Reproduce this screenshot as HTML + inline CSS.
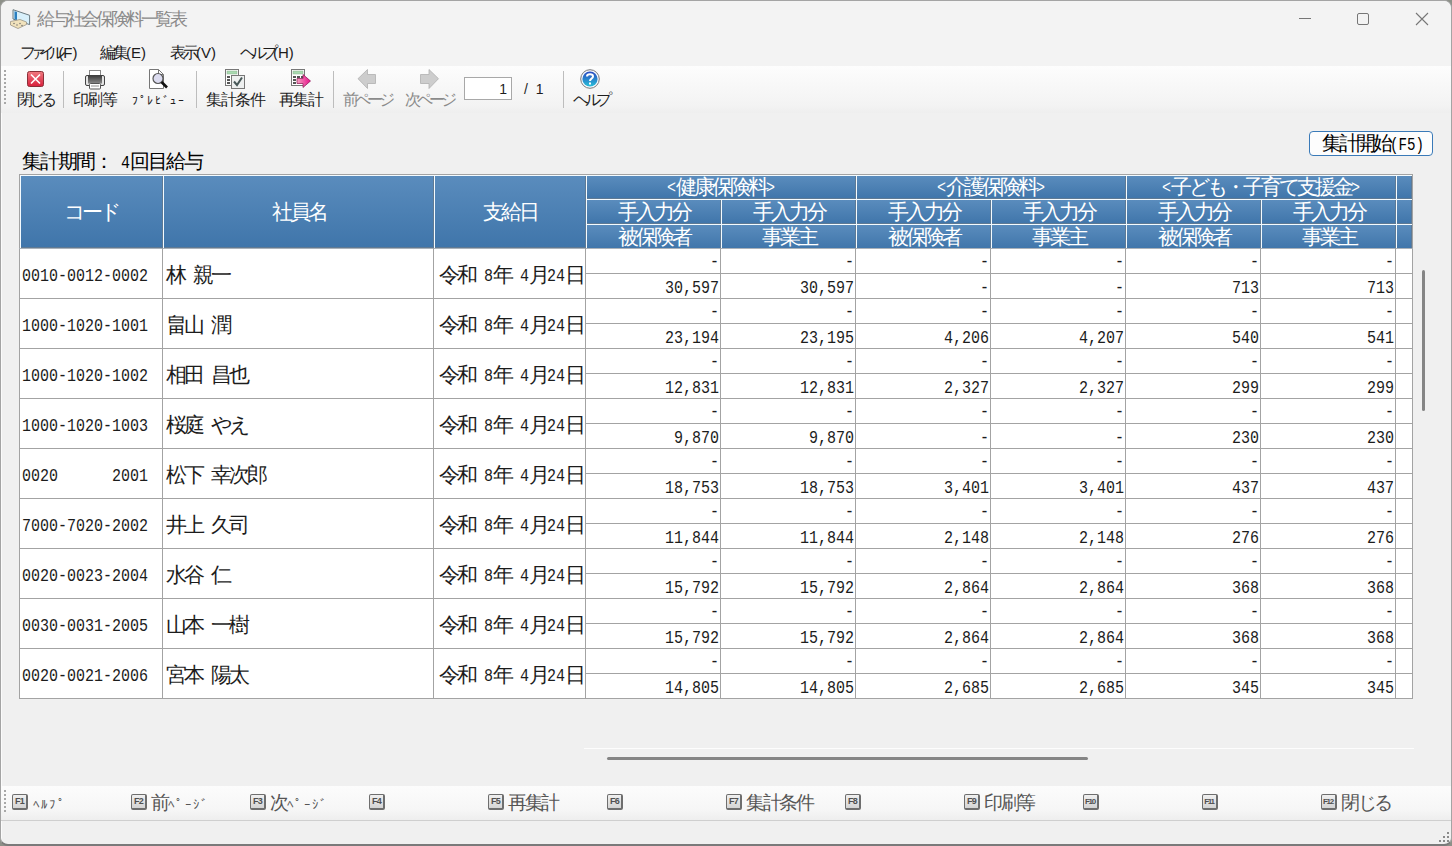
<!DOCTYPE html>
<html><head><meta charset="utf-8"><title>給与社会保険料一覧表</title>
<style>
html,body{margin:0;padding:0;width:1452px;height:846px;overflow:hidden;background:#8d9088;font-family:"Liberation Sans",sans-serif;}
.a{position:absolute;box-sizing:border-box;}
.t{position:absolute;white-space:pre;line-height:20px;height:20px;}
.t i{font-style:normal;display:inline-block;text-align:center;font-family:"Liberation Sans",sans-serif;font-size:var(--fs);}
.mk{display:inline-block;width:0;height:0}
.t b{font-weight:normal;display:inline-block}
.tb i{position:relative;top:1px}
.t u{text-decoration:none;display:inline-block;transform-origin:0 0}
#win{position:absolute;left:0;top:0;width:1452px;height:846px;background:#f0f0f0;border-radius:8px;border:1px solid #a4a4a4;border-bottom:2px solid #7a7a7a;box-sizing:border-box;overflow:hidden;box-shadow:inset 1px 1px 0 #fbfbfb}
.hc{position:absolute;box-sizing:border-box;background:linear-gradient(#5a8cbd,#3f75aa);border-left:1px solid #f4fbff;border-top:1px solid #f4fbff;box-shadow:inset -1px -1px 0 #5f7a94}
.vl{position:absolute;width:1px;background:#a3a3a3}
.hl{position:absolute;height:1px;background:#a3a3a3}
.sep{position:absolute;width:1px;top:71px;height:37px;background:#bdbdbd}
.fk{position:absolute;top:794px;width:16px;height:16px;box-sizing:border-box;border:1px solid #6e6e6e;border-radius:2px;background:linear-gradient(#f0f0f0,#d4d4d4);border-bottom-width:2px;border-right-width:2px;font:bold 9px "Liberation Sans",sans-serif;color:#505050;text-align:center;line-height:13px;letter-spacing:-0.8px}
</style></head><body>
<div id="win">
  <div class="a" style="left:0;top:0;width:1452px;height:65px;background:#f3f3f3"></div>
  <div class="a" style="left:0;top:65px;width:1452px;height:47px;background:linear-gradient(#fdfdfd 0%,#f8f8f8 40%,#f3f3f3 85%,#eeeeee 100%)"></div>
  <div class="a" style="left:0;top:785px;width:1452px;height:35px;background:linear-gradient(#fcfcfc,#f6f6f6 70%,#eeeeee);border-bottom:1px solid #cfcfcf"></div>
</div>

<!-- title icon -->
<svg class="a" style="left:9px;top:8px" width="22" height="22" viewBox="0 0 22 22">
  <path d="M4 1.7 L4 11 L20.6 16.6 L20.6 7.3 Z" fill="#d8f0fb" stroke="#6b7a80" stroke-width="1"/>
  <path d="M5.5 3.2 L8 4 L8 12 L5.5 11.2 Z" fill="#2a7fc0"/>
  <path d="M1.5 13.5 L11 11.5 L17.5 14 L17.5 16.5 L9 20.5 L1.5 17 Z" fill="#f1e2bc" stroke="#9a9384" stroke-width="0.8"/>
  <circle cx="5" cy="15.5" r="0.7" fill="#666"/><circle cx="8" cy="17" r="0.7" fill="#666"/><circle cx="11" cy="15.5" r="0.7" fill="#666"/><circle cx="13" cy="17.5" r="0.7" fill="#666"/>
</svg>
<!-- window controls -->
<div class="a" style="left:1299px;top:18px;width:12px;height:1px;background:#767676"></div>
<div class="a" style="left:1357px;top:13px;width:12px;height:12px;border:1px solid #767676;border-radius:2px"></div>
<svg class="a" style="left:1415px;top:12px" width="14" height="14" viewBox="0 0 14 14"><path d="M1 1L13 13M13 1L1 13" stroke="#767676" stroke-width="1.1"/></svg>

<!-- toolbar grip -->
<svg class="a" style="left:4px;top:70px" width="3" height="36"><g fill="#a8a8a8"><rect x="0" y="0" width="2" height="2"/><rect x="0" y="4" width="2" height="2"/><rect x="0" y="8" width="2" height="2"/><rect x="0" y="12" width="2" height="2"/><rect x="0" y="16" width="2" height="2"/><rect x="0" y="20" width="2" height="2"/><rect x="0" y="24" width="2" height="2"/><rect x="0" y="28" width="2" height="2"/><rect x="0" y="32" width="2" height="2"/></g></svg>
<div class="sep" style="left:63px"></div>
<div class="sep" style="left:196px"></div>
<div class="sep" style="left:333px"></div>
<div class="sep" style="left:563px"></div>

<!-- close icon -->
<svg class="a" style="left:27px;top:71px" width="17" height="16" viewBox="0 0 17 16">
  <defs><linearGradient id="rg" x1="0" y1="0" x2="0" y2="1"><stop offset="0" stop-color="#f07a80"/><stop offset="1" stop-color="#d8203c"/></linearGradient></defs>
  <rect x="0.5" y="0.5" width="16" height="15" rx="2" fill="url(#rg)" stroke="#8a3038" stroke-width="1"/>
  <path d="M4 3.5L13 12.5M13 3.5L4 12.5" stroke="#fff" stroke-width="1.6"/>
</svg>
<!-- printer -->
<svg class="a" style="left:84px;top:69px" width="22" height="21" viewBox="0 0 22 21">
  <defs><linearGradient id="pg" x1="0" y1="0" x2="0" y2="1"><stop offset="0" stop-color="#3a3a3a"/><stop offset="1" stop-color="#8a8a8a"/></linearGradient></defs>
  <rect x="5.5" y="1.5" width="11" height="5" fill="#fff" stroke="#888"/>
  <rect x="1.5" y="6.5" width="19" height="10" rx="1.5" fill="#e4e4e4" stroke="#444"/>
  <rect x="4" y="6.5" width="14" height="8" fill="url(#pg)"/>
  <rect x="5.5" y="14.5" width="11" height="5.5" rx="1" fill="#fff" stroke="#555"/>
  <rect x="7" y="16" width="8" height="2" fill="#c8c8c8"/>
</svg>
<!-- preview -->
<svg class="a" style="left:148px;top:68px" width="22" height="22" viewBox="0 0 22 22">
  <path d="M1.5 1.5 L10.5 1.5 L15.5 6.5 L15.5 20.5 L1.5 20.5 Z" fill="#fff" stroke="#777"/>
  <path d="M10.5 1.5 L10.5 6.5 L15.5 6.5" fill="none" stroke="#777"/>
  <circle cx="10" cy="10.5" r="5" fill="#dcdcf0" stroke="#555" stroke-width="1.2"/>
  <path d="M13.5 14 L19 19.5" stroke="#111" stroke-width="2.6"/>
</svg>
<!-- 集計条件 icon -->
<svg class="a" style="left:224px;top:68px" width="22" height="22" viewBox="0 0 22 22">
  <rect x="1.5" y="1.5" width="13" height="16" fill="#fff" stroke="#777"/>
  <rect x="3" y="3" width="10" height="3" fill="#a9dab0" stroke="#8ab090" stroke-width="0.5"/>
  <rect x="3" y="8" width="3" height="2" fill="#555"/><rect x="3" y="11" width="3" height="2" fill="#555"/><rect x="3" y="14" width="3" height="2" fill="#555"/>
  <rect x="7.5" y="7.5" width="13" height="13" fill="#eef0f0" stroke="#777"/>
  <path d="M10 13.5 L13 17 L18 9.5" fill="none" stroke="#4a5a5a" stroke-width="2"/>
</svg>
<!-- 再集計 icon -->
<svg class="a" style="left:290px;top:68px" width="22" height="22" viewBox="0 0 22 22">
  <defs><linearGradient id="kg" x1="0" y1="0" x2="1" y2="0"><stop offset="0" stop-color="#f5a0c0"/><stop offset="1" stop-color="#e8108a"/></linearGradient></defs>
  <rect x="1.5" y="1.5" width="13" height="16" fill="#fff" stroke="#777"/>
  <rect x="3" y="3" width="10" height="3" fill="#a9dab0" stroke="#8ab090" stroke-width="0.5"/>
  <rect x="3" y="8" width="3" height="2" fill="#555"/><rect x="7" y="8" width="3" height="2" fill="#555"/><rect x="11" y="8" width="2" height="2" fill="#555"/><rect x="3" y="11" width="3" height="2" fill="#555"/><rect x="3" y="14" width="3" height="2" fill="#555"/>
  <path d="M7 10.5 L13 10.5 L13 6.5 L20.5 13 L13 19.5 L13 15.5 L7 15.5 Z" fill="url(#kg)" stroke="#8a1050" stroke-width="0.7"/>
</svg>
<!-- arrows -->
<svg class="a" style="left:357px;top:69px" width="20" height="20" viewBox="0 0 20 20"><path d="M1 9.7 L10.5 0.5 L10.5 5.5 L18.5 5.5 L18.5 14.5 L10.5 14.5 L10.5 19.5 Z" fill="#cdcdcd" stroke="#b0b0b0" stroke-width="0.8"/></svg>
<svg class="a" style="left:419px;top:69px" width="21" height="20" viewBox="0 0 21 20"><path d="M19.5 9.7 L10 0.5 L10 5.5 L1.5 5.5 L1.5 14.5 L10 14.5 L10 19.5 Z" fill="#cdcdcd" stroke="#b0b0b0" stroke-width="0.8"/></svg>
<!-- page textbox -->
<div class="a" style="left:464px;top:77px;width:48px;height:23px;background:#fff;border:1px solid #a8a8a8"></div>
<!-- help icon -->
<svg class="a" style="left:580px;top:69px" width="20" height="20" viewBox="0 0 20 20">
  <defs><linearGradient id="hg" x1="0" y1="0" x2="0" y2="1"><stop offset="0" stop-color="#2a48c0"/><stop offset="1" stop-color="#28c0d8"/></linearGradient></defs>
  <circle cx="10" cy="10" r="9.3" fill="#f4f8ff" stroke="#7a7a7a" stroke-width="1"/>
  <circle cx="10" cy="10" r="7.6" fill="url(#hg)"/>
  <path d="M7 7.5 C7 4.5 13 4.5 13 7.5 C13 9.5 10 9.5 10 12" fill="none" stroke="#fff" stroke-width="2"/>
  <rect x="9" y="13.5" width="2" height="2" fill="#fff"/>
</svg>

<!-- button -->
<div class="a" style="left:1309px;top:131px;width:124px;height:25px;background:#fdfdfd;border:1px solid #3a7ab8;border-radius:4px"></div>

<!-- table body bg -->
<div class="a" style="left:19px;top:174px;width:1394px;height:525px;background:#fff;border:1px solid #a3a3a3"></div>
<!-- header cells -->
<div class="hc" style="left:20px;top:175px;width:143px;height:73px"></div>
<div class="hc" style="left:163px;top:175px;width:271px;height:73px"></div>
<div class="hc" style="left:434px;top:175px;width:152px;height:73px"></div>
<div class="hc" style="left:586px;top:175px;width:270px;height:24px"></div>
<div class="hc" style="left:856px;top:175px;width:270px;height:24px"></div>
<div class="hc" style="left:1126px;top:175px;width:270px;height:24px"></div>
<div class="hc" style="left:1396px;top:175px;width:16px;height:24px"></div>
<div class="hc" style="left:586px;top:199px;width:135px;height:25px"></div>
<div class="hc" style="left:586px;top:224px;width:135px;height:25px"></div>
<div class="hc" style="left:721px;top:199px;width:135px;height:25px"></div>
<div class="hc" style="left:721px;top:224px;width:135px;height:25px"></div>
<div class="hc" style="left:856px;top:199px;width:135px;height:25px"></div>
<div class="hc" style="left:856px;top:224px;width:135px;height:25px"></div>
<div class="hc" style="left:991px;top:199px;width:135px;height:25px"></div>
<div class="hc" style="left:991px;top:224px;width:135px;height:25px"></div>
<div class="hc" style="left:1126px;top:199px;width:135px;height:25px"></div>
<div class="hc" style="left:1126px;top:224px;width:135px;height:25px"></div>
<div class="hc" style="left:1261px;top:199px;width:135px;height:25px"></div>
<div class="hc" style="left:1261px;top:224px;width:135px;height:25px"></div>
<div class="hc" style="left:1396px;top:199px;width:16px;height:25px"></div>
<div class="hc" style="left:1396px;top:224px;width:16px;height:25px"></div>
<div class="hl" style="left:19px;top:248px;width:1394px;background:#a9b1b9"></div>
<div class="vl" style="left:162px;top:248px;height:450px"></div>
<div class="vl" style="left:433px;top:248px;height:450px"></div>
<div class="vl" style="left:585px;top:248px;height:450px"></div>
<div class="vl" style="left:720px;top:248px;height:450px"></div>
<div class="vl" style="left:855px;top:248px;height:450px"></div>
<div class="vl" style="left:990px;top:248px;height:450px"></div>
<div class="vl" style="left:1125px;top:248px;height:450px"></div>
<div class="vl" style="left:1260px;top:248px;height:450px"></div>
<div class="vl" style="left:1395px;top:248px;height:450px"></div>
<div class="hl" style="left:585px;top:273px;width:827px"></div>
<div class="hl" style="left:19px;top:298px;width:1393px"></div>
<div class="hl" style="left:585px;top:323px;width:827px"></div>
<div class="hl" style="left:19px;top:348px;width:1393px"></div>
<div class="hl" style="left:585px;top:373px;width:827px"></div>
<div class="hl" style="left:19px;top:398px;width:1393px"></div>
<div class="hl" style="left:585px;top:423px;width:827px"></div>
<div class="hl" style="left:19px;top:448px;width:1393px"></div>
<div class="hl" style="left:585px;top:473px;width:827px"></div>
<div class="hl" style="left:19px;top:498px;width:1393px"></div>
<div class="hl" style="left:585px;top:523px;width:827px"></div>
<div class="hl" style="left:19px;top:548px;width:1393px"></div>
<div class="hl" style="left:585px;top:573px;width:827px"></div>
<div class="hl" style="left:19px;top:598px;width:1393px"></div>
<div class="hl" style="left:585px;top:623px;width:827px"></div>
<div class="hl" style="left:19px;top:648px;width:1393px"></div>
<div class="hl" style="left:585px;top:673px;width:827px"></div>

<!-- scrollbars -->
<div class="a" style="left:1422px;top:270px;width:3px;height:141px;background:#858585;border-radius:2px"></div>
<div class="a" style="left:584px;top:748px;width:830px;height:1px;background:#fdfdfd"></div>
<div class="a" style="left:607px;top:757px;width:481px;height:3px;background:#858585;border-radius:2px"></div>

<!-- fkey grip -->
<svg class="a" style="left:4px;top:790px" width="3" height="24"><g fill="#a8a8a8"><rect x="0" y="0" width="2" height="2"/><rect x="0" y="4" width="2" height="2"/><rect x="0" y="8" width="2" height="2"/><rect x="0" y="12" width="2" height="2"/><rect x="0" y="16" width="2" height="2"/><rect x="0" y="20" width="2" height="2"/></g></svg>
<div class="fk" style="left:12px">F1</div>
<div class="fk" style="left:131px">F2</div>
<div class="fk" style="left:250px">F3</div>
<div class="fk" style="left:369px">F4</div>
<div class="fk" style="left:488px">F5</div>
<div class="fk" style="left:607px">F6</div>
<div class="fk" style="left:726px">F7</div>
<div class="fk" style="left:845px">F8</div>
<div class="fk" style="left:964px">F9</div>
<div class="fk" style="left:1083px;font-size:8px;letter-spacing:-1.2px;text-indent:-1px">F10</div>
<div class="fk" style="left:1202px;font-size:8px;letter-spacing:-1.2px;text-indent:-1px">F11</div>
<div class="fk" style="left:1321px;font-size:8px;letter-spacing:-1.2px;text-indent:-1px">F12</div>
<!-- resize grip -->
<svg class="a" style="left:1438px;top:832px" width="12" height="11"><g fill="#8a8a8a"><rect x="9" y="0" width="2" height="2"/><rect x="5" y="4" width="2" height="2"/><rect x="9" y="4" width="2" height="2"/><rect x="1" y="8" width="2" height="2"/><rect x="5" y="8" width="2" height="2"/><rect x="9" y="8" width="2" height="2"/></g></svg>

<div class="t " id="t0" style="top:9.00px;color:#8a8a8a;font-family:'Liberation Sans',sans-serif;font-size:13.320px;left:37px;--fs:18px;"><i style="width:14.8px">給</i><i style="width:14.8px">与</i><i style="width:14.8px">社</i><i style="width:14.8px">会</i><i style="width:14.8px">保</i><i style="width:14.8px">険</i><i style="width:14.8px">料</i><i style="width:14.8px">一</i><i style="width:14.8px">覧</i><i style="width:14.8px">表</i></div>
<div class="t " id="t1" style="top:43.00px;color:#1b1b1b;font-family:'Liberation Sans',sans-serif;font-size:15.000px;left:20px;--fs:16px;"><i style="width:9.6px">フ</i><i style="width:9.6px">ァ</i><i style="width:9.6px">イ</i><i style="width:9.6px">ル</i>(F)</div>
<div class="t " id="t2" style="top:43.00px;color:#1b1b1b;font-family:'Liberation Sans',sans-serif;font-size:15.000px;left:100px;--fs:16px;"><i style="width:13px">編</i><i style="width:13px">集</i>(E)</div>
<div class="t " id="t3" style="top:43.00px;color:#1b1b1b;font-family:'Liberation Sans',sans-serif;font-size:15.000px;left:170px;--fs:16px;"><i style="width:13px">表</i><i style="width:13px">示</i>(V)</div>
<div class="t " id="t4" style="top:43.00px;color:#1b1b1b;font-family:'Liberation Sans',sans-serif;font-size:15.000px;left:240px;--fs:16px;"><i style="width:11px">ヘ</i><i style="width:11px">ル</i><i style="width:11px">プ</i>(H)</div>
<div class="t " id="t5" style="top:90.00px;color:#1e1e1e;font-family:'Liberation Sans',sans-serif;font-size:15.000px;left:17px;--fs:16px;"><i style="width:12px">閉</i><i style="width:12px">じ</i><i style="width:12px">る</i></div>
<div class="t " id="t6" style="top:90.00px;color:#1e1e1e;font-family:'Liberation Sans',sans-serif;font-size:15.000px;left:73px;--fs:16px;"><i style="width:14.4px">印</i><i style="width:14.4px">刷</i><i style="width:14.4px">等</i></div>
<div class="t " id="t7" style="top:90.00px;color:#1e1e1e;font-family:'Liberation Sans',sans-serif;font-size:15.000px;left:131px;--fs:16px;"><i style="width:7.7px;font-size:12px">ﾌ</i><i style="width:7.7px;font-size:12px">ﾟ</i><i style="width:7.7px;font-size:12px">ﾚ</i><i style="width:7.7px;font-size:12px">ﾋ</i><i style="width:7.7px;font-size:12px">ﾞ</i><i style="width:7.7px;font-size:12px">ｭ</i><i style="width:7.7px;font-size:12px">ｰ</i></div>
<div class="t " id="t8" style="top:90.00px;color:#1e1e1e;font-family:'Liberation Sans',sans-serif;font-size:15.000px;left:206px;--fs:16px;"><i style="width:14.5px">集</i><i style="width:14.5px">計</i><i style="width:14.5px">条</i><i style="width:14.5px">件</i></div>
<div class="t " id="t9" style="top:90.00px;color:#1e1e1e;font-family:'Liberation Sans',sans-serif;font-size:15.000px;left:279px;--fs:16px;"><i style="width:14.4px">再</i><i style="width:14.4px">集</i><i style="width:14.4px">計</i></div>
<div class="t " id="t10" style="top:90.00px;color:#8a8a8a;font-family:'Liberation Sans',sans-serif;font-size:15.000px;left:343px;--fs:16px;"><i style="width:12px">前</i><i style="width:12px">ペ</i><i style="width:12px">ー</i><i style="width:12px">ジ</i></div>
<div class="t " id="t11" style="top:90.00px;color:#8a8a8a;font-family:'Liberation Sans',sans-serif;font-size:15.000px;left:405px;--fs:16px;"><i style="width:12px">次</i><i style="width:12px">ペ</i><i style="width:12px">ー</i><i style="width:12px">ジ</i></div>
<div class="t " id="t12" style="top:90.00px;color:#1e1e1e;font-family:'Liberation Sans',sans-serif;font-size:15.000px;left:573px;--fs:16px;"><i style="width:11.7px">ヘ</i><i style="width:11.7px">ル</i><i style="width:11.7px">プ</i></div>
<div class="t " id="t13" style="top:79.00px;color:#1e1e1e;font-family:'Liberation Sans',sans-serif;font-size:14.000px;right:945px;--fs:14px;">1</div>
<div class="t " id="t14" style="top:79.00px;color:#1e1e1e;font-family:'Liberation Sans',sans-serif;font-size:14.000px;left:524px;--fs:14px;">/  1</div>
<div class="t " id="t15" style="top:151.00px;color:#000;font-family:'Liberation Mono',monospace;font-size:19.000px;left:22px;--fs:20px;"><i style="width:18px">集</i><i style="width:18px">計</i><i style="width:18px">期</i><i style="width:18px">間</i><i style="width:18px">：</i><b style="width:18.000px"><u style="transform:scaleX(0.7895)"> 4</u></b><i style="width:18px">回</i><i style="width:18px">目</i><i style="width:18px">給</i><i style="width:18px">与</i></div>
<div class="t " id="t16" style="top:133.00px;color:#000;font-family:'Liberation Mono',monospace;font-size:19.000px;left:1322px;--fs:20px;"><i style="width:17px">集</i><i style="width:17px">計</i><i style="width:17px">開</i><i style="width:17px">始</i><b style="width:34.000px"><u style="transform:scaleX(0.7456)">(F5)</u></b></div>
<div class="t tb" id="t17" style="top:201.00px;color:#ffffff;font-family:'Liberation Mono',monospace;font-size:19.000px;left:19px;width:144px;text-align:center;--fs:21px;"><i style="width:18px">コ</i><i style="width:18px">ー</i><i style="width:18px">ド</i></div>
<div class="t tb" id="t18" style="top:201.00px;color:#ffffff;font-family:'Liberation Mono',monospace;font-size:19.000px;left:163px;width:271px;text-align:center;--fs:21px;"><i style="width:18px">社</i><i style="width:18px">員</i><i style="width:18px">名</i></div>
<div class="t tb" id="t19" style="top:201.00px;color:#ffffff;font-family:'Liberation Mono',monospace;font-size:19.000px;left:434px;width:152px;text-align:center;--fs:21px;"><i style="width:18px">支</i><i style="width:18px">給</i><i style="width:18px">日</i></div>
<div class="t tb" id="t20" style="top:176.00px;color:#ffffff;font-family:'Liberation Mono',monospace;font-size:19.000px;left:586px;width:270px;text-align:center;--fs:21px;"><b style="width:9.000px"><u style="transform:scaleX(0.7895)">&lt;</u></b><i style="width:18px">健</i><i style="width:18px">康</i><i style="width:18px">保</i><i style="width:18px">険</i><i style="width:18px">料</i><b style="width:9.000px"><u style="transform:scaleX(0.7895)">&gt;</u></b></div>
<div class="t tb" id="t21" style="top:176.00px;color:#ffffff;font-family:'Liberation Mono',monospace;font-size:19.000px;left:856px;width:270px;text-align:center;--fs:21px;"><b style="width:9.000px"><u style="transform:scaleX(0.7895)">&lt;</u></b><i style="width:18px">介</i><i style="width:18px">護</i><i style="width:18px">保</i><i style="width:18px">険</i><i style="width:18px">料</i><b style="width:9.000px"><u style="transform:scaleX(0.7895)">&gt;</u></b></div>
<div class="t tb" id="t22" style="top:176.00px;color:#ffffff;font-family:'Liberation Mono',monospace;font-size:19.000px;left:1126px;width:270px;text-align:center;--fs:21px;"><b style="width:9.000px"><u style="transform:scaleX(0.7895)">&lt;</u></b><i style="width:18px">子</i><i style="width:18px">ど</i><i style="width:18px">も</i><i style="width:18px">・</i><i style="width:18px">子</i><i style="width:18px">育</i><i style="width:18px">て</i><i style="width:18px">支</i><i style="width:18px">援</i><i style="width:18px">金</i><b style="width:9.000px"><u style="transform:scaleX(0.7895)">&gt;</u></b></div>
<div class="t tb" id="t23" style="top:201.00px;color:#ffffff;font-family:'Liberation Mono',monospace;font-size:19.000px;left:586px;width:135px;text-align:center;--fs:21px;"><i style="width:18px">手</i><i style="width:18px">入</i><i style="width:18px">力</i><i style="width:18px">分</i></div>
<div class="t tb" id="t24" style="top:226.00px;color:#ffffff;font-family:'Liberation Mono',monospace;font-size:19.000px;left:586px;width:135px;text-align:center;--fs:21px;"><i style="width:18px">被</i><i style="width:18px">保</i><i style="width:18px">険</i><i style="width:18px">者</i></div>
<div class="t tb" id="t25" style="top:201.00px;color:#ffffff;font-family:'Liberation Mono',monospace;font-size:19.000px;left:721px;width:135px;text-align:center;--fs:21px;"><i style="width:18px">手</i><i style="width:18px">入</i><i style="width:18px">力</i><i style="width:18px">分</i></div>
<div class="t tb" id="t26" style="top:226.00px;color:#ffffff;font-family:'Liberation Mono',monospace;font-size:19.000px;left:721px;width:135px;text-align:center;--fs:21px;"><i style="width:18px">事</i><i style="width:18px">業</i><i style="width:18px">主</i></div>
<div class="t tb" id="t27" style="top:201.00px;color:#ffffff;font-family:'Liberation Mono',monospace;font-size:19.000px;left:856px;width:135px;text-align:center;--fs:21px;"><i style="width:18px">手</i><i style="width:18px">入</i><i style="width:18px">力</i><i style="width:18px">分</i></div>
<div class="t tb" id="t28" style="top:226.00px;color:#ffffff;font-family:'Liberation Mono',monospace;font-size:19.000px;left:856px;width:135px;text-align:center;--fs:21px;"><i style="width:18px">被</i><i style="width:18px">保</i><i style="width:18px">険</i><i style="width:18px">者</i></div>
<div class="t tb" id="t29" style="top:201.00px;color:#ffffff;font-family:'Liberation Mono',monospace;font-size:19.000px;left:991px;width:135px;text-align:center;--fs:21px;"><i style="width:18px">手</i><i style="width:18px">入</i><i style="width:18px">力</i><i style="width:18px">分</i></div>
<div class="t tb" id="t30" style="top:226.00px;color:#ffffff;font-family:'Liberation Mono',monospace;font-size:19.000px;left:991px;width:135px;text-align:center;--fs:21px;"><i style="width:18px">事</i><i style="width:18px">業</i><i style="width:18px">主</i></div>
<div class="t tb" id="t31" style="top:201.00px;color:#ffffff;font-family:'Liberation Mono',monospace;font-size:19.000px;left:1126px;width:135px;text-align:center;--fs:21px;"><i style="width:18px">手</i><i style="width:18px">入</i><i style="width:18px">力</i><i style="width:18px">分</i></div>
<div class="t tb" id="t32" style="top:226.00px;color:#ffffff;font-family:'Liberation Mono',monospace;font-size:19.000px;left:1126px;width:135px;text-align:center;--fs:21px;"><i style="width:18px">被</i><i style="width:18px">保</i><i style="width:18px">険</i><i style="width:18px">者</i></div>
<div class="t tb" id="t33" style="top:201.00px;color:#ffffff;font-family:'Liberation Mono',monospace;font-size:19.000px;left:1261px;width:135px;text-align:center;--fs:21px;"><i style="width:18px">手</i><i style="width:18px">入</i><i style="width:18px">力</i><i style="width:18px">分</i></div>
<div class="t tb" id="t34" style="top:226.00px;color:#ffffff;font-family:'Liberation Mono',monospace;font-size:19.000px;left:1261px;width:135px;text-align:center;--fs:21px;"><i style="width:18px">事</i><i style="width:18px">業</i><i style="width:18px">主</i></div>
<div class="t tb" id="t35" style="top:266.00px;color:#1c1c1c;font-family:'Liberation Mono',monospace;font-size:19.000px;left:22px;--fs:21px;"><b style="width:126.000px"><u style="transform:scaleX(0.7895)">0010-0012-0002</u></b></div>
<div class="t tb" id="t36" style="top:264.00px;color:#1c1c1c;font-family:'Liberation Mono',monospace;font-size:19.000px;left:166px;--fs:21px;"><i style="width:18px">林</i><b style="width:9.000px"><u style="transform:scaleX(0.7895)"> </u></b><i style="width:18px">親</i><i style="width:18px">一</i></div>
<div class="t tb" id="t37" style="top:264.00px;color:#1c1c1c;font-family:'Liberation Mono',monospace;font-size:19.000px;left:439px;--fs:21px;"><i style="width:18px">令</i><i style="width:18px">和</i><b style="width:18.000px"><u style="transform:scaleX(0.7895)"> 8</u></b><i style="width:18px">年</i><b style="width:18.000px"><u style="transform:scaleX(0.7895)"> 4</u></b><i style="width:18px">月</i><b style="width:18.000px"><u style="transform:scaleX(0.7895)">24</u></b><i style="width:18px">日</i></div>
<div class="t " id="t38" style="top:252.00px;color:#1c1c1c;font-family:'Liberation Mono',monospace;font-size:19.000px;right:733px;--fs:21px;"><b style="width:9.000px"><u style="transform:scaleX(0.7895)">-</u></b></div>
<div class="t " id="t39" style="top:278.00px;color:#1c1c1c;font-family:'Liberation Mono',monospace;font-size:19.000px;right:733px;--fs:21px;"><b style="width:54.000px"><u style="transform:scaleX(0.7895)">30,597</u></b></div>
<div class="t " id="t40" style="top:252.00px;color:#1c1c1c;font-family:'Liberation Mono',monospace;font-size:19.000px;right:598px;--fs:21px;"><b style="width:9.000px"><u style="transform:scaleX(0.7895)">-</u></b></div>
<div class="t " id="t41" style="top:278.00px;color:#1c1c1c;font-family:'Liberation Mono',monospace;font-size:19.000px;right:598px;--fs:21px;"><b style="width:54.000px"><u style="transform:scaleX(0.7895)">30,597</u></b></div>
<div class="t " id="t42" style="top:252.00px;color:#1c1c1c;font-family:'Liberation Mono',monospace;font-size:19.000px;right:463px;--fs:21px;"><b style="width:9.000px"><u style="transform:scaleX(0.7895)">-</u></b></div>
<div class="t " id="t43" style="top:278.00px;color:#1c1c1c;font-family:'Liberation Mono',monospace;font-size:19.000px;right:463px;--fs:21px;"><b style="width:9.000px"><u style="transform:scaleX(0.7895)">-</u></b></div>
<div class="t " id="t44" style="top:252.00px;color:#1c1c1c;font-family:'Liberation Mono',monospace;font-size:19.000px;right:328px;--fs:21px;"><b style="width:9.000px"><u style="transform:scaleX(0.7895)">-</u></b></div>
<div class="t " id="t45" style="top:278.00px;color:#1c1c1c;font-family:'Liberation Mono',monospace;font-size:19.000px;right:328px;--fs:21px;"><b style="width:9.000px"><u style="transform:scaleX(0.7895)">-</u></b></div>
<div class="t " id="t46" style="top:252.00px;color:#1c1c1c;font-family:'Liberation Mono',monospace;font-size:19.000px;right:193px;--fs:21px;"><b style="width:9.000px"><u style="transform:scaleX(0.7895)">-</u></b></div>
<div class="t " id="t47" style="top:278.00px;color:#1c1c1c;font-family:'Liberation Mono',monospace;font-size:19.000px;right:193px;--fs:21px;"><b style="width:27.000px"><u style="transform:scaleX(0.7895)">713</u></b></div>
<div class="t " id="t48" style="top:252.00px;color:#1c1c1c;font-family:'Liberation Mono',monospace;font-size:19.000px;right:58px;--fs:21px;"><b style="width:9.000px"><u style="transform:scaleX(0.7895)">-</u></b></div>
<div class="t " id="t49" style="top:278.00px;color:#1c1c1c;font-family:'Liberation Mono',monospace;font-size:19.000px;right:58px;--fs:21px;"><b style="width:27.000px"><u style="transform:scaleX(0.7895)">713</u></b></div>
<div class="t tb" id="t50" style="top:316.00px;color:#1c1c1c;font-family:'Liberation Mono',monospace;font-size:19.000px;left:22px;--fs:21px;"><b style="width:126.000px"><u style="transform:scaleX(0.7895)">1000-1020-1001</u></b></div>
<div class="t tb" id="t51" style="top:314.00px;color:#1c1c1c;font-family:'Liberation Mono',monospace;font-size:19.000px;left:166px;--fs:21px;"><i style="width:18px">畠</i><i style="width:18px">山</i><b style="width:9.000px"><u style="transform:scaleX(0.7895)"> </u></b><i style="width:18px">潤</i></div>
<div class="t tb" id="t52" style="top:314.00px;color:#1c1c1c;font-family:'Liberation Mono',monospace;font-size:19.000px;left:439px;--fs:21px;"><i style="width:18px">令</i><i style="width:18px">和</i><b style="width:18.000px"><u style="transform:scaleX(0.7895)"> 8</u></b><i style="width:18px">年</i><b style="width:18.000px"><u style="transform:scaleX(0.7895)"> 4</u></b><i style="width:18px">月</i><b style="width:18.000px"><u style="transform:scaleX(0.7895)">24</u></b><i style="width:18px">日</i></div>
<div class="t " id="t53" style="top:302.00px;color:#1c1c1c;font-family:'Liberation Mono',monospace;font-size:19.000px;right:733px;--fs:21px;"><b style="width:9.000px"><u style="transform:scaleX(0.7895)">-</u></b></div>
<div class="t " id="t54" style="top:328.00px;color:#1c1c1c;font-family:'Liberation Mono',monospace;font-size:19.000px;right:733px;--fs:21px;"><b style="width:54.000px"><u style="transform:scaleX(0.7895)">23,194</u></b></div>
<div class="t " id="t55" style="top:302.00px;color:#1c1c1c;font-family:'Liberation Mono',monospace;font-size:19.000px;right:598px;--fs:21px;"><b style="width:9.000px"><u style="transform:scaleX(0.7895)">-</u></b></div>
<div class="t " id="t56" style="top:328.00px;color:#1c1c1c;font-family:'Liberation Mono',monospace;font-size:19.000px;right:598px;--fs:21px;"><b style="width:54.000px"><u style="transform:scaleX(0.7895)">23,195</u></b></div>
<div class="t " id="t57" style="top:302.00px;color:#1c1c1c;font-family:'Liberation Mono',monospace;font-size:19.000px;right:463px;--fs:21px;"><b style="width:9.000px"><u style="transform:scaleX(0.7895)">-</u></b></div>
<div class="t " id="t58" style="top:328.00px;color:#1c1c1c;font-family:'Liberation Mono',monospace;font-size:19.000px;right:463px;--fs:21px;"><b style="width:45.000px"><u style="transform:scaleX(0.7895)">4,206</u></b></div>
<div class="t " id="t59" style="top:302.00px;color:#1c1c1c;font-family:'Liberation Mono',monospace;font-size:19.000px;right:328px;--fs:21px;"><b style="width:9.000px"><u style="transform:scaleX(0.7895)">-</u></b></div>
<div class="t " id="t60" style="top:328.00px;color:#1c1c1c;font-family:'Liberation Mono',monospace;font-size:19.000px;right:328px;--fs:21px;"><b style="width:45.000px"><u style="transform:scaleX(0.7895)">4,207</u></b></div>
<div class="t " id="t61" style="top:302.00px;color:#1c1c1c;font-family:'Liberation Mono',monospace;font-size:19.000px;right:193px;--fs:21px;"><b style="width:9.000px"><u style="transform:scaleX(0.7895)">-</u></b></div>
<div class="t " id="t62" style="top:328.00px;color:#1c1c1c;font-family:'Liberation Mono',monospace;font-size:19.000px;right:193px;--fs:21px;"><b style="width:27.000px"><u style="transform:scaleX(0.7895)">540</u></b></div>
<div class="t " id="t63" style="top:302.00px;color:#1c1c1c;font-family:'Liberation Mono',monospace;font-size:19.000px;right:58px;--fs:21px;"><b style="width:9.000px"><u style="transform:scaleX(0.7895)">-</u></b></div>
<div class="t " id="t64" style="top:328.00px;color:#1c1c1c;font-family:'Liberation Mono',monospace;font-size:19.000px;right:58px;--fs:21px;"><b style="width:27.000px"><u style="transform:scaleX(0.7895)">541</u></b></div>
<div class="t tb" id="t65" style="top:366.00px;color:#1c1c1c;font-family:'Liberation Mono',monospace;font-size:19.000px;left:22px;--fs:21px;"><b style="width:126.000px"><u style="transform:scaleX(0.7895)">1000-1020-1002</u></b></div>
<div class="t tb" id="t66" style="top:364.00px;color:#1c1c1c;font-family:'Liberation Mono',monospace;font-size:19.000px;left:166px;--fs:21px;"><i style="width:18px">相</i><i style="width:18px">田</i><b style="width:9.000px"><u style="transform:scaleX(0.7895)"> </u></b><i style="width:18px">昌</i><i style="width:18px">也</i></div>
<div class="t tb" id="t67" style="top:364.00px;color:#1c1c1c;font-family:'Liberation Mono',monospace;font-size:19.000px;left:439px;--fs:21px;"><i style="width:18px">令</i><i style="width:18px">和</i><b style="width:18.000px"><u style="transform:scaleX(0.7895)"> 8</u></b><i style="width:18px">年</i><b style="width:18.000px"><u style="transform:scaleX(0.7895)"> 4</u></b><i style="width:18px">月</i><b style="width:18.000px"><u style="transform:scaleX(0.7895)">24</u></b><i style="width:18px">日</i></div>
<div class="t " id="t68" style="top:352.00px;color:#1c1c1c;font-family:'Liberation Mono',monospace;font-size:19.000px;right:733px;--fs:21px;"><b style="width:9.000px"><u style="transform:scaleX(0.7895)">-</u></b></div>
<div class="t " id="t69" style="top:378.00px;color:#1c1c1c;font-family:'Liberation Mono',monospace;font-size:19.000px;right:733px;--fs:21px;"><b style="width:54.000px"><u style="transform:scaleX(0.7895)">12,831</u></b></div>
<div class="t " id="t70" style="top:352.00px;color:#1c1c1c;font-family:'Liberation Mono',monospace;font-size:19.000px;right:598px;--fs:21px;"><b style="width:9.000px"><u style="transform:scaleX(0.7895)">-</u></b></div>
<div class="t " id="t71" style="top:378.00px;color:#1c1c1c;font-family:'Liberation Mono',monospace;font-size:19.000px;right:598px;--fs:21px;"><b style="width:54.000px"><u style="transform:scaleX(0.7895)">12,831</u></b></div>
<div class="t " id="t72" style="top:352.00px;color:#1c1c1c;font-family:'Liberation Mono',monospace;font-size:19.000px;right:463px;--fs:21px;"><b style="width:9.000px"><u style="transform:scaleX(0.7895)">-</u></b></div>
<div class="t " id="t73" style="top:378.00px;color:#1c1c1c;font-family:'Liberation Mono',monospace;font-size:19.000px;right:463px;--fs:21px;"><b style="width:45.000px"><u style="transform:scaleX(0.7895)">2,327</u></b></div>
<div class="t " id="t74" style="top:352.00px;color:#1c1c1c;font-family:'Liberation Mono',monospace;font-size:19.000px;right:328px;--fs:21px;"><b style="width:9.000px"><u style="transform:scaleX(0.7895)">-</u></b></div>
<div class="t " id="t75" style="top:378.00px;color:#1c1c1c;font-family:'Liberation Mono',monospace;font-size:19.000px;right:328px;--fs:21px;"><b style="width:45.000px"><u style="transform:scaleX(0.7895)">2,327</u></b></div>
<div class="t " id="t76" style="top:352.00px;color:#1c1c1c;font-family:'Liberation Mono',monospace;font-size:19.000px;right:193px;--fs:21px;"><b style="width:9.000px"><u style="transform:scaleX(0.7895)">-</u></b></div>
<div class="t " id="t77" style="top:378.00px;color:#1c1c1c;font-family:'Liberation Mono',monospace;font-size:19.000px;right:193px;--fs:21px;"><b style="width:27.000px"><u style="transform:scaleX(0.7895)">299</u></b></div>
<div class="t " id="t78" style="top:352.00px;color:#1c1c1c;font-family:'Liberation Mono',monospace;font-size:19.000px;right:58px;--fs:21px;"><b style="width:9.000px"><u style="transform:scaleX(0.7895)">-</u></b></div>
<div class="t " id="t79" style="top:378.00px;color:#1c1c1c;font-family:'Liberation Mono',monospace;font-size:19.000px;right:58px;--fs:21px;"><b style="width:27.000px"><u style="transform:scaleX(0.7895)">299</u></b></div>
<div class="t tb" id="t80" style="top:416.00px;color:#1c1c1c;font-family:'Liberation Mono',monospace;font-size:19.000px;left:22px;--fs:21px;"><b style="width:126.000px"><u style="transform:scaleX(0.7895)">1000-1020-1003</u></b></div>
<div class="t tb" id="t81" style="top:414.00px;color:#1c1c1c;font-family:'Liberation Mono',monospace;font-size:19.000px;left:166px;--fs:21px;"><i style="width:18px">桜</i><i style="width:18px">庭</i><b style="width:9.000px"><u style="transform:scaleX(0.7895)"> </u></b><i style="width:18px">や</i><i style="width:18px">え</i></div>
<div class="t tb" id="t82" style="top:414.00px;color:#1c1c1c;font-family:'Liberation Mono',monospace;font-size:19.000px;left:439px;--fs:21px;"><i style="width:18px">令</i><i style="width:18px">和</i><b style="width:18.000px"><u style="transform:scaleX(0.7895)"> 8</u></b><i style="width:18px">年</i><b style="width:18.000px"><u style="transform:scaleX(0.7895)"> 4</u></b><i style="width:18px">月</i><b style="width:18.000px"><u style="transform:scaleX(0.7895)">24</u></b><i style="width:18px">日</i></div>
<div class="t " id="t83" style="top:402.00px;color:#1c1c1c;font-family:'Liberation Mono',monospace;font-size:19.000px;right:733px;--fs:21px;"><b style="width:9.000px"><u style="transform:scaleX(0.7895)">-</u></b></div>
<div class="t " id="t84" style="top:428.00px;color:#1c1c1c;font-family:'Liberation Mono',monospace;font-size:19.000px;right:733px;--fs:21px;"><b style="width:45.000px"><u style="transform:scaleX(0.7895)">9,870</u></b></div>
<div class="t " id="t85" style="top:402.00px;color:#1c1c1c;font-family:'Liberation Mono',monospace;font-size:19.000px;right:598px;--fs:21px;"><b style="width:9.000px"><u style="transform:scaleX(0.7895)">-</u></b></div>
<div class="t " id="t86" style="top:428.00px;color:#1c1c1c;font-family:'Liberation Mono',monospace;font-size:19.000px;right:598px;--fs:21px;"><b style="width:45.000px"><u style="transform:scaleX(0.7895)">9,870</u></b></div>
<div class="t " id="t87" style="top:402.00px;color:#1c1c1c;font-family:'Liberation Mono',monospace;font-size:19.000px;right:463px;--fs:21px;"><b style="width:9.000px"><u style="transform:scaleX(0.7895)">-</u></b></div>
<div class="t " id="t88" style="top:428.00px;color:#1c1c1c;font-family:'Liberation Mono',monospace;font-size:19.000px;right:463px;--fs:21px;"><b style="width:9.000px"><u style="transform:scaleX(0.7895)">-</u></b></div>
<div class="t " id="t89" style="top:402.00px;color:#1c1c1c;font-family:'Liberation Mono',monospace;font-size:19.000px;right:328px;--fs:21px;"><b style="width:9.000px"><u style="transform:scaleX(0.7895)">-</u></b></div>
<div class="t " id="t90" style="top:428.00px;color:#1c1c1c;font-family:'Liberation Mono',monospace;font-size:19.000px;right:328px;--fs:21px;"><b style="width:9.000px"><u style="transform:scaleX(0.7895)">-</u></b></div>
<div class="t " id="t91" style="top:402.00px;color:#1c1c1c;font-family:'Liberation Mono',monospace;font-size:19.000px;right:193px;--fs:21px;"><b style="width:9.000px"><u style="transform:scaleX(0.7895)">-</u></b></div>
<div class="t " id="t92" style="top:428.00px;color:#1c1c1c;font-family:'Liberation Mono',monospace;font-size:19.000px;right:193px;--fs:21px;"><b style="width:27.000px"><u style="transform:scaleX(0.7895)">230</u></b></div>
<div class="t " id="t93" style="top:402.00px;color:#1c1c1c;font-family:'Liberation Mono',monospace;font-size:19.000px;right:58px;--fs:21px;"><b style="width:9.000px"><u style="transform:scaleX(0.7895)">-</u></b></div>
<div class="t " id="t94" style="top:428.00px;color:#1c1c1c;font-family:'Liberation Mono',monospace;font-size:19.000px;right:58px;--fs:21px;"><b style="width:27.000px"><u style="transform:scaleX(0.7895)">230</u></b></div>
<div class="t tb" id="t95" style="top:466.00px;color:#1c1c1c;font-family:'Liberation Mono',monospace;font-size:19.000px;left:22px;--fs:21px;"><b style="width:126.000px"><u style="transform:scaleX(0.7895)">0020      2001</u></b></div>
<div class="t tb" id="t96" style="top:464.00px;color:#1c1c1c;font-family:'Liberation Mono',monospace;font-size:19.000px;left:166px;--fs:21px;"><i style="width:18px">松</i><i style="width:18px">下</i><b style="width:9.000px"><u style="transform:scaleX(0.7895)"> </u></b><i style="width:18px">幸</i><i style="width:18px">次</i><i style="width:18px">郎</i></div>
<div class="t tb" id="t97" style="top:464.00px;color:#1c1c1c;font-family:'Liberation Mono',monospace;font-size:19.000px;left:439px;--fs:21px;"><i style="width:18px">令</i><i style="width:18px">和</i><b style="width:18.000px"><u style="transform:scaleX(0.7895)"> 8</u></b><i style="width:18px">年</i><b style="width:18.000px"><u style="transform:scaleX(0.7895)"> 4</u></b><i style="width:18px">月</i><b style="width:18.000px"><u style="transform:scaleX(0.7895)">24</u></b><i style="width:18px">日</i></div>
<div class="t " id="t98" style="top:452.00px;color:#1c1c1c;font-family:'Liberation Mono',monospace;font-size:19.000px;right:733px;--fs:21px;"><b style="width:9.000px"><u style="transform:scaleX(0.7895)">-</u></b></div>
<div class="t " id="t99" style="top:478.00px;color:#1c1c1c;font-family:'Liberation Mono',monospace;font-size:19.000px;right:733px;--fs:21px;"><b style="width:54.000px"><u style="transform:scaleX(0.7895)">18,753</u></b></div>
<div class="t " id="t100" style="top:452.00px;color:#1c1c1c;font-family:'Liberation Mono',monospace;font-size:19.000px;right:598px;--fs:21px;"><b style="width:9.000px"><u style="transform:scaleX(0.7895)">-</u></b></div>
<div class="t " id="t101" style="top:478.00px;color:#1c1c1c;font-family:'Liberation Mono',monospace;font-size:19.000px;right:598px;--fs:21px;"><b style="width:54.000px"><u style="transform:scaleX(0.7895)">18,753</u></b></div>
<div class="t " id="t102" style="top:452.00px;color:#1c1c1c;font-family:'Liberation Mono',monospace;font-size:19.000px;right:463px;--fs:21px;"><b style="width:9.000px"><u style="transform:scaleX(0.7895)">-</u></b></div>
<div class="t " id="t103" style="top:478.00px;color:#1c1c1c;font-family:'Liberation Mono',monospace;font-size:19.000px;right:463px;--fs:21px;"><b style="width:45.000px"><u style="transform:scaleX(0.7895)">3,401</u></b></div>
<div class="t " id="t104" style="top:452.00px;color:#1c1c1c;font-family:'Liberation Mono',monospace;font-size:19.000px;right:328px;--fs:21px;"><b style="width:9.000px"><u style="transform:scaleX(0.7895)">-</u></b></div>
<div class="t " id="t105" style="top:478.00px;color:#1c1c1c;font-family:'Liberation Mono',monospace;font-size:19.000px;right:328px;--fs:21px;"><b style="width:45.000px"><u style="transform:scaleX(0.7895)">3,401</u></b></div>
<div class="t " id="t106" style="top:452.00px;color:#1c1c1c;font-family:'Liberation Mono',monospace;font-size:19.000px;right:193px;--fs:21px;"><b style="width:9.000px"><u style="transform:scaleX(0.7895)">-</u></b></div>
<div class="t " id="t107" style="top:478.00px;color:#1c1c1c;font-family:'Liberation Mono',monospace;font-size:19.000px;right:193px;--fs:21px;"><b style="width:27.000px"><u style="transform:scaleX(0.7895)">437</u></b></div>
<div class="t " id="t108" style="top:452.00px;color:#1c1c1c;font-family:'Liberation Mono',monospace;font-size:19.000px;right:58px;--fs:21px;"><b style="width:9.000px"><u style="transform:scaleX(0.7895)">-</u></b></div>
<div class="t " id="t109" style="top:478.00px;color:#1c1c1c;font-family:'Liberation Mono',monospace;font-size:19.000px;right:58px;--fs:21px;"><b style="width:27.000px"><u style="transform:scaleX(0.7895)">437</u></b></div>
<div class="t tb" id="t110" style="top:516.00px;color:#1c1c1c;font-family:'Liberation Mono',monospace;font-size:19.000px;left:22px;--fs:21px;"><b style="width:126.000px"><u style="transform:scaleX(0.7895)">7000-7020-2002</u></b></div>
<div class="t tb" id="t111" style="top:514.00px;color:#1c1c1c;font-family:'Liberation Mono',monospace;font-size:19.000px;left:166px;--fs:21px;"><i style="width:18px">井</i><i style="width:18px">上</i><b style="width:9.000px"><u style="transform:scaleX(0.7895)"> </u></b><i style="width:18px">久</i><i style="width:18px">司</i></div>
<div class="t tb" id="t112" style="top:514.00px;color:#1c1c1c;font-family:'Liberation Mono',monospace;font-size:19.000px;left:439px;--fs:21px;"><i style="width:18px">令</i><i style="width:18px">和</i><b style="width:18.000px"><u style="transform:scaleX(0.7895)"> 8</u></b><i style="width:18px">年</i><b style="width:18.000px"><u style="transform:scaleX(0.7895)"> 4</u></b><i style="width:18px">月</i><b style="width:18.000px"><u style="transform:scaleX(0.7895)">24</u></b><i style="width:18px">日</i></div>
<div class="t " id="t113" style="top:502.00px;color:#1c1c1c;font-family:'Liberation Mono',monospace;font-size:19.000px;right:733px;--fs:21px;"><b style="width:9.000px"><u style="transform:scaleX(0.7895)">-</u></b></div>
<div class="t " id="t114" style="top:528.00px;color:#1c1c1c;font-family:'Liberation Mono',monospace;font-size:19.000px;right:733px;--fs:21px;"><b style="width:54.000px"><u style="transform:scaleX(0.7895)">11,844</u></b></div>
<div class="t " id="t115" style="top:502.00px;color:#1c1c1c;font-family:'Liberation Mono',monospace;font-size:19.000px;right:598px;--fs:21px;"><b style="width:9.000px"><u style="transform:scaleX(0.7895)">-</u></b></div>
<div class="t " id="t116" style="top:528.00px;color:#1c1c1c;font-family:'Liberation Mono',monospace;font-size:19.000px;right:598px;--fs:21px;"><b style="width:54.000px"><u style="transform:scaleX(0.7895)">11,844</u></b></div>
<div class="t " id="t117" style="top:502.00px;color:#1c1c1c;font-family:'Liberation Mono',monospace;font-size:19.000px;right:463px;--fs:21px;"><b style="width:9.000px"><u style="transform:scaleX(0.7895)">-</u></b></div>
<div class="t " id="t118" style="top:528.00px;color:#1c1c1c;font-family:'Liberation Mono',monospace;font-size:19.000px;right:463px;--fs:21px;"><b style="width:45.000px"><u style="transform:scaleX(0.7895)">2,148</u></b></div>
<div class="t " id="t119" style="top:502.00px;color:#1c1c1c;font-family:'Liberation Mono',monospace;font-size:19.000px;right:328px;--fs:21px;"><b style="width:9.000px"><u style="transform:scaleX(0.7895)">-</u></b></div>
<div class="t " id="t120" style="top:528.00px;color:#1c1c1c;font-family:'Liberation Mono',monospace;font-size:19.000px;right:328px;--fs:21px;"><b style="width:45.000px"><u style="transform:scaleX(0.7895)">2,148</u></b></div>
<div class="t " id="t121" style="top:502.00px;color:#1c1c1c;font-family:'Liberation Mono',monospace;font-size:19.000px;right:193px;--fs:21px;"><b style="width:9.000px"><u style="transform:scaleX(0.7895)">-</u></b></div>
<div class="t " id="t122" style="top:528.00px;color:#1c1c1c;font-family:'Liberation Mono',monospace;font-size:19.000px;right:193px;--fs:21px;"><b style="width:27.000px"><u style="transform:scaleX(0.7895)">276</u></b></div>
<div class="t " id="t123" style="top:502.00px;color:#1c1c1c;font-family:'Liberation Mono',monospace;font-size:19.000px;right:58px;--fs:21px;"><b style="width:9.000px"><u style="transform:scaleX(0.7895)">-</u></b></div>
<div class="t " id="t124" style="top:528.00px;color:#1c1c1c;font-family:'Liberation Mono',monospace;font-size:19.000px;right:58px;--fs:21px;"><b style="width:27.000px"><u style="transform:scaleX(0.7895)">276</u></b></div>
<div class="t tb" id="t125" style="top:566.00px;color:#1c1c1c;font-family:'Liberation Mono',monospace;font-size:19.000px;left:22px;--fs:21px;"><b style="width:126.000px"><u style="transform:scaleX(0.7895)">0020-0023-2004</u></b></div>
<div class="t tb" id="t126" style="top:564.00px;color:#1c1c1c;font-family:'Liberation Mono',monospace;font-size:19.000px;left:166px;--fs:21px;"><i style="width:18px">水</i><i style="width:18px">谷</i><b style="width:9.000px"><u style="transform:scaleX(0.7895)"> </u></b><i style="width:18px">仁</i></div>
<div class="t tb" id="t127" style="top:564.00px;color:#1c1c1c;font-family:'Liberation Mono',monospace;font-size:19.000px;left:439px;--fs:21px;"><i style="width:18px">令</i><i style="width:18px">和</i><b style="width:18.000px"><u style="transform:scaleX(0.7895)"> 8</u></b><i style="width:18px">年</i><b style="width:18.000px"><u style="transform:scaleX(0.7895)"> 4</u></b><i style="width:18px">月</i><b style="width:18.000px"><u style="transform:scaleX(0.7895)">24</u></b><i style="width:18px">日</i></div>
<div class="t " id="t128" style="top:552.00px;color:#1c1c1c;font-family:'Liberation Mono',monospace;font-size:19.000px;right:733px;--fs:21px;"><b style="width:9.000px"><u style="transform:scaleX(0.7895)">-</u></b></div>
<div class="t " id="t129" style="top:578.00px;color:#1c1c1c;font-family:'Liberation Mono',monospace;font-size:19.000px;right:733px;--fs:21px;"><b style="width:54.000px"><u style="transform:scaleX(0.7895)">15,792</u></b></div>
<div class="t " id="t130" style="top:552.00px;color:#1c1c1c;font-family:'Liberation Mono',monospace;font-size:19.000px;right:598px;--fs:21px;"><b style="width:9.000px"><u style="transform:scaleX(0.7895)">-</u></b></div>
<div class="t " id="t131" style="top:578.00px;color:#1c1c1c;font-family:'Liberation Mono',monospace;font-size:19.000px;right:598px;--fs:21px;"><b style="width:54.000px"><u style="transform:scaleX(0.7895)">15,792</u></b></div>
<div class="t " id="t132" style="top:552.00px;color:#1c1c1c;font-family:'Liberation Mono',monospace;font-size:19.000px;right:463px;--fs:21px;"><b style="width:9.000px"><u style="transform:scaleX(0.7895)">-</u></b></div>
<div class="t " id="t133" style="top:578.00px;color:#1c1c1c;font-family:'Liberation Mono',monospace;font-size:19.000px;right:463px;--fs:21px;"><b style="width:45.000px"><u style="transform:scaleX(0.7895)">2,864</u></b></div>
<div class="t " id="t134" style="top:552.00px;color:#1c1c1c;font-family:'Liberation Mono',monospace;font-size:19.000px;right:328px;--fs:21px;"><b style="width:9.000px"><u style="transform:scaleX(0.7895)">-</u></b></div>
<div class="t " id="t135" style="top:578.00px;color:#1c1c1c;font-family:'Liberation Mono',monospace;font-size:19.000px;right:328px;--fs:21px;"><b style="width:45.000px"><u style="transform:scaleX(0.7895)">2,864</u></b></div>
<div class="t " id="t136" style="top:552.00px;color:#1c1c1c;font-family:'Liberation Mono',monospace;font-size:19.000px;right:193px;--fs:21px;"><b style="width:9.000px"><u style="transform:scaleX(0.7895)">-</u></b></div>
<div class="t " id="t137" style="top:578.00px;color:#1c1c1c;font-family:'Liberation Mono',monospace;font-size:19.000px;right:193px;--fs:21px;"><b style="width:27.000px"><u style="transform:scaleX(0.7895)">368</u></b></div>
<div class="t " id="t138" style="top:552.00px;color:#1c1c1c;font-family:'Liberation Mono',monospace;font-size:19.000px;right:58px;--fs:21px;"><b style="width:9.000px"><u style="transform:scaleX(0.7895)">-</u></b></div>
<div class="t " id="t139" style="top:578.00px;color:#1c1c1c;font-family:'Liberation Mono',monospace;font-size:19.000px;right:58px;--fs:21px;"><b style="width:27.000px"><u style="transform:scaleX(0.7895)">368</u></b></div>
<div class="t tb" id="t140" style="top:616.00px;color:#1c1c1c;font-family:'Liberation Mono',monospace;font-size:19.000px;left:22px;--fs:21px;"><b style="width:126.000px"><u style="transform:scaleX(0.7895)">0030-0031-2005</u></b></div>
<div class="t tb" id="t141" style="top:614.00px;color:#1c1c1c;font-family:'Liberation Mono',monospace;font-size:19.000px;left:166px;--fs:21px;"><i style="width:18px">山</i><i style="width:18px">本</i><b style="width:9.000px"><u style="transform:scaleX(0.7895)"> </u></b><i style="width:18px">一</i><i style="width:18px">樹</i></div>
<div class="t tb" id="t142" style="top:614.00px;color:#1c1c1c;font-family:'Liberation Mono',monospace;font-size:19.000px;left:439px;--fs:21px;"><i style="width:18px">令</i><i style="width:18px">和</i><b style="width:18.000px"><u style="transform:scaleX(0.7895)"> 8</u></b><i style="width:18px">年</i><b style="width:18.000px"><u style="transform:scaleX(0.7895)"> 4</u></b><i style="width:18px">月</i><b style="width:18.000px"><u style="transform:scaleX(0.7895)">24</u></b><i style="width:18px">日</i></div>
<div class="t " id="t143" style="top:602.00px;color:#1c1c1c;font-family:'Liberation Mono',monospace;font-size:19.000px;right:733px;--fs:21px;"><b style="width:9.000px"><u style="transform:scaleX(0.7895)">-</u></b></div>
<div class="t " id="t144" style="top:628.00px;color:#1c1c1c;font-family:'Liberation Mono',monospace;font-size:19.000px;right:733px;--fs:21px;"><b style="width:54.000px"><u style="transform:scaleX(0.7895)">15,792</u></b></div>
<div class="t " id="t145" style="top:602.00px;color:#1c1c1c;font-family:'Liberation Mono',monospace;font-size:19.000px;right:598px;--fs:21px;"><b style="width:9.000px"><u style="transform:scaleX(0.7895)">-</u></b></div>
<div class="t " id="t146" style="top:628.00px;color:#1c1c1c;font-family:'Liberation Mono',monospace;font-size:19.000px;right:598px;--fs:21px;"><b style="width:54.000px"><u style="transform:scaleX(0.7895)">15,792</u></b></div>
<div class="t " id="t147" style="top:602.00px;color:#1c1c1c;font-family:'Liberation Mono',monospace;font-size:19.000px;right:463px;--fs:21px;"><b style="width:9.000px"><u style="transform:scaleX(0.7895)">-</u></b></div>
<div class="t " id="t148" style="top:628.00px;color:#1c1c1c;font-family:'Liberation Mono',monospace;font-size:19.000px;right:463px;--fs:21px;"><b style="width:45.000px"><u style="transform:scaleX(0.7895)">2,864</u></b></div>
<div class="t " id="t149" style="top:602.00px;color:#1c1c1c;font-family:'Liberation Mono',monospace;font-size:19.000px;right:328px;--fs:21px;"><b style="width:9.000px"><u style="transform:scaleX(0.7895)">-</u></b></div>
<div class="t " id="t150" style="top:628.00px;color:#1c1c1c;font-family:'Liberation Mono',monospace;font-size:19.000px;right:328px;--fs:21px;"><b style="width:45.000px"><u style="transform:scaleX(0.7895)">2,864</u></b></div>
<div class="t " id="t151" style="top:602.00px;color:#1c1c1c;font-family:'Liberation Mono',monospace;font-size:19.000px;right:193px;--fs:21px;"><b style="width:9.000px"><u style="transform:scaleX(0.7895)">-</u></b></div>
<div class="t " id="t152" style="top:628.00px;color:#1c1c1c;font-family:'Liberation Mono',monospace;font-size:19.000px;right:193px;--fs:21px;"><b style="width:27.000px"><u style="transform:scaleX(0.7895)">368</u></b></div>
<div class="t " id="t153" style="top:602.00px;color:#1c1c1c;font-family:'Liberation Mono',monospace;font-size:19.000px;right:58px;--fs:21px;"><b style="width:9.000px"><u style="transform:scaleX(0.7895)">-</u></b></div>
<div class="t " id="t154" style="top:628.00px;color:#1c1c1c;font-family:'Liberation Mono',monospace;font-size:19.000px;right:58px;--fs:21px;"><b style="width:27.000px"><u style="transform:scaleX(0.7895)">368</u></b></div>
<div class="t tb" id="t155" style="top:666.00px;color:#1c1c1c;font-family:'Liberation Mono',monospace;font-size:19.000px;left:22px;--fs:21px;"><b style="width:126.000px"><u style="transform:scaleX(0.7895)">0020-0021-2006</u></b></div>
<div class="t tb" id="t156" style="top:664.00px;color:#1c1c1c;font-family:'Liberation Mono',monospace;font-size:19.000px;left:166px;--fs:21px;"><i style="width:18px">宮</i><i style="width:18px">本</i><b style="width:9.000px"><u style="transform:scaleX(0.7895)"> </u></b><i style="width:18px">陽</i><i style="width:18px">太</i></div>
<div class="t tb" id="t157" style="top:664.00px;color:#1c1c1c;font-family:'Liberation Mono',monospace;font-size:19.000px;left:439px;--fs:21px;"><i style="width:18px">令</i><i style="width:18px">和</i><b style="width:18.000px"><u style="transform:scaleX(0.7895)"> 8</u></b><i style="width:18px">年</i><b style="width:18.000px"><u style="transform:scaleX(0.7895)"> 4</u></b><i style="width:18px">月</i><b style="width:18.000px"><u style="transform:scaleX(0.7895)">24</u></b><i style="width:18px">日</i></div>
<div class="t " id="t158" style="top:652.00px;color:#1c1c1c;font-family:'Liberation Mono',monospace;font-size:19.000px;right:733px;--fs:21px;"><b style="width:9.000px"><u style="transform:scaleX(0.7895)">-</u></b></div>
<div class="t " id="t159" style="top:678.00px;color:#1c1c1c;font-family:'Liberation Mono',monospace;font-size:19.000px;right:733px;--fs:21px;"><b style="width:54.000px"><u style="transform:scaleX(0.7895)">14,805</u></b></div>
<div class="t " id="t160" style="top:652.00px;color:#1c1c1c;font-family:'Liberation Mono',monospace;font-size:19.000px;right:598px;--fs:21px;"><b style="width:9.000px"><u style="transform:scaleX(0.7895)">-</u></b></div>
<div class="t " id="t161" style="top:678.00px;color:#1c1c1c;font-family:'Liberation Mono',monospace;font-size:19.000px;right:598px;--fs:21px;"><b style="width:54.000px"><u style="transform:scaleX(0.7895)">14,805</u></b></div>
<div class="t " id="t162" style="top:652.00px;color:#1c1c1c;font-family:'Liberation Mono',monospace;font-size:19.000px;right:463px;--fs:21px;"><b style="width:9.000px"><u style="transform:scaleX(0.7895)">-</u></b></div>
<div class="t " id="t163" style="top:678.00px;color:#1c1c1c;font-family:'Liberation Mono',monospace;font-size:19.000px;right:463px;--fs:21px;"><b style="width:45.000px"><u style="transform:scaleX(0.7895)">2,685</u></b></div>
<div class="t " id="t164" style="top:652.00px;color:#1c1c1c;font-family:'Liberation Mono',monospace;font-size:19.000px;right:328px;--fs:21px;"><b style="width:9.000px"><u style="transform:scaleX(0.7895)">-</u></b></div>
<div class="t " id="t165" style="top:678.00px;color:#1c1c1c;font-family:'Liberation Mono',monospace;font-size:19.000px;right:328px;--fs:21px;"><b style="width:45.000px"><u style="transform:scaleX(0.7895)">2,685</u></b></div>
<div class="t " id="t166" style="top:652.00px;color:#1c1c1c;font-family:'Liberation Mono',monospace;font-size:19.000px;right:193px;--fs:21px;"><b style="width:9.000px"><u style="transform:scaleX(0.7895)">-</u></b></div>
<div class="t " id="t167" style="top:678.00px;color:#1c1c1c;font-family:'Liberation Mono',monospace;font-size:19.000px;right:193px;--fs:21px;"><b style="width:27.000px"><u style="transform:scaleX(0.7895)">345</u></b></div>
<div class="t " id="t168" style="top:652.00px;color:#1c1c1c;font-family:'Liberation Mono',monospace;font-size:19.000px;right:58px;--fs:21px;"><b style="width:9.000px"><u style="transform:scaleX(0.7895)">-</u></b></div>
<div class="t " id="t169" style="top:678.00px;color:#1c1c1c;font-family:'Liberation Mono',monospace;font-size:19.000px;right:58px;--fs:21px;"><b style="width:27.000px"><u style="transform:scaleX(0.7895)">345</u></b></div>
<div class="t " id="t170" style="top:795.00px;color:#555555;font-family:'Liberation Mono',monospace;font-size:13.833px;left:32px;--fs:19px;"><i style="width:8.3px;font-size:13px">ﾍ</i><i style="width:8.3px;font-size:13px">ﾙ</i><i style="width:8.3px;font-size:13px">ﾌ</i><i style="width:8.3px;font-size:13px">ﾟ</i></div>
<div class="t " id="t171" style="top:793.00px;color:#555555;font-family:'Liberation Mono',monospace;font-size:13.833px;left:151px;--fs:19px;"><i style="width:16.5px">前</i><i style="width:8.3px;font-size:13px">ﾍ</i><i style="width:8.3px;font-size:13px">ﾟ</i><i style="width:8.3px;font-size:13px">ｰ</i><i style="width:8.3px;font-size:13px">ｼ</i><i style="width:8.3px;font-size:13px">ﾞ</i></div>
<div class="t " id="t172" style="top:793.00px;color:#555555;font-family:'Liberation Mono',monospace;font-size:13.833px;left:270px;--fs:19px;"><i style="width:16.5px">次</i><i style="width:8.3px;font-size:13px">ﾍ</i><i style="width:8.3px;font-size:13px">ﾟ</i><i style="width:8.3px;font-size:13px">ｰ</i><i style="width:8.3px;font-size:13px">ｼ</i><i style="width:8.3px;font-size:13px">ﾞ</i></div>
<div class="t " id="t173" style="top:793.00px;color:#555555;font-family:'Liberation Mono',monospace;font-size:13.833px;left:508px;--fs:19px;"><i style="width:16.5px">再</i><i style="width:16.5px">集</i><i style="width:16.5px">計</i></div>
<div class="t " id="t174" style="top:793.00px;color:#555555;font-family:'Liberation Mono',monospace;font-size:13.833px;left:746px;--fs:19px;"><i style="width:16.5px">集</i><i style="width:16.5px">計</i><i style="width:16.5px">条</i><i style="width:16.5px">件</i></div>
<div class="t " id="t175" style="top:793.00px;color:#555555;font-family:'Liberation Mono',monospace;font-size:13.833px;left:984px;--fs:19px;"><i style="width:16.5px">印</i><i style="width:16.5px">刷</i><i style="width:16.5px">等</i></div>
<div class="t " id="t176" style="top:793.00px;color:#555555;font-family:'Liberation Mono',monospace;font-size:13.833px;left:1341px;--fs:19px;"><i style="width:16.5px">閉</i><i style="width:16.5px">じ</i><i style="width:16.5px">る</i></div>
</body></html>
